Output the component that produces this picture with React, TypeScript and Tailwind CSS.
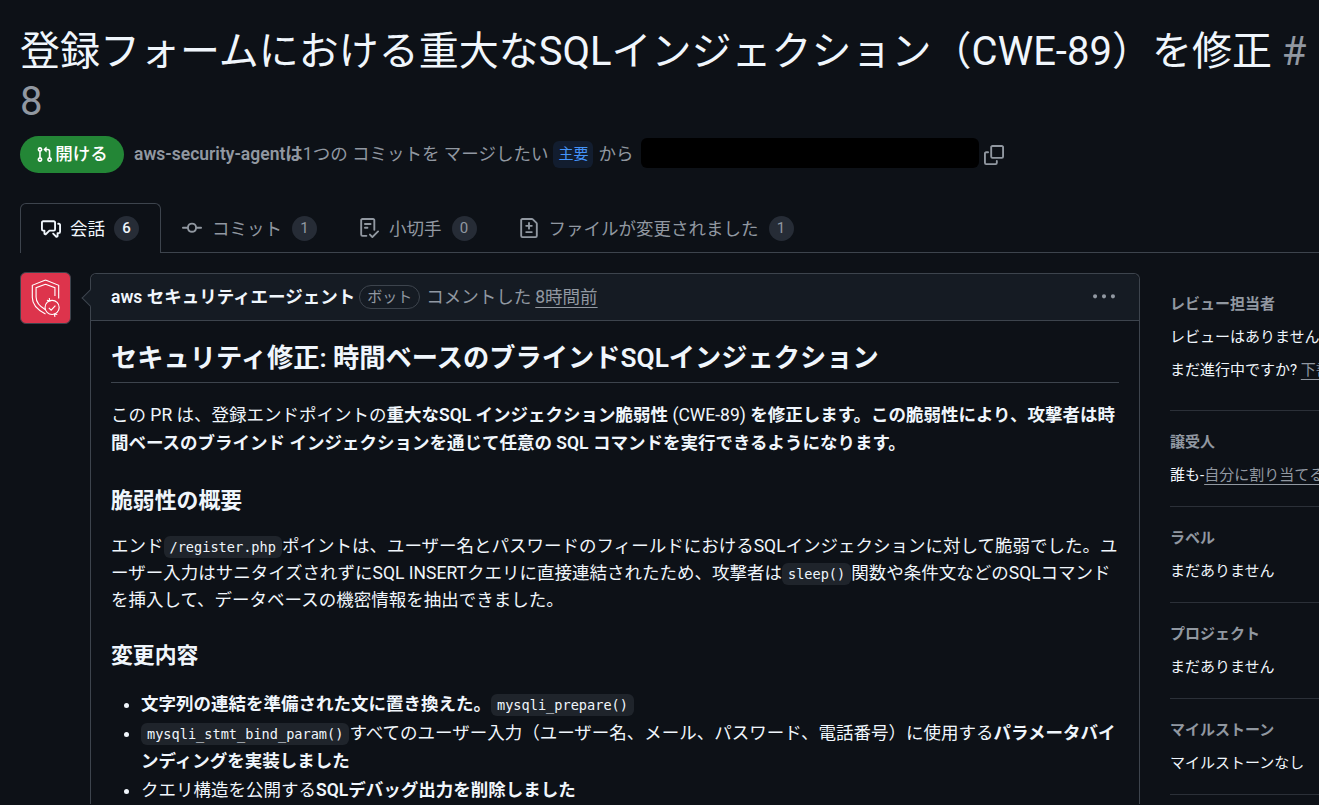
import type { ReactNode } from 'react'

const sans = 'font-["Roboto","Noto_Sans_CJK_JP",sans-serif]'

function Octicon({ d, className }: { d: string; className: string }) {
  return (
    <svg viewBox="0 0 16 16" fill="currentColor" className={className}>
      <path d={d} />
    </svg>
  )
}

const icons = {
  pull: 'M1.5 3.25a2.25 2.25 0 1 1 3 2.122v5.256a2.251 2.251 0 1 1-1.5 0V5.372A2.25 2.25 0 0 1 1.5 3.25Zm5.677-.177L9.573.677A.25.25 0 0 1 10 .854V2.5h1A2.5 2.5 0 0 1 13.5 5v5.628a2.251 2.251 0 1 1-1.5 0V5a1 1 0 0 0-1-1h-1v1.646a.25.25 0 0 1-.427.177L7.177 3.427a.25.25 0 0 1 0-.354ZM3.75 2.5a.75.75 0 1 0 0 1.5.75.75 0 0 0 0-1.5Zm0 9.5a.75.75 0 1 0 0 1.5.75.75 0 0 0 0-1.5Zm8.25.75a.75.75 0 1 0 1.5 0 .75.75 0 0 0-1.5 0Z',
  discussion: 'M1.75 1h8.5c.966 0 1.75.784 1.75 1.75v5.5A1.75 1.75 0 0 1 10.25 10H7.061l-2.574 2.573A1.458 1.458 0 0 1 2 11.543V10h-.25A1.75 1.75 0 0 1 0 8.25v-5.5C0 1.784.784 1 1.75 1ZM1.5 2.75v5.5c0 .138.112.25.25.25h1a.75.75 0 0 1 .75.75v2.19l2.72-2.72a.749.749 0 0 1 .53-.22h3.5a.25.25 0 0 0 .25-.25v-5.5a.25.25 0 0 0-.25-.25h-8.5a.25.25 0 0 0-.25.25Zm13 2a.25.25 0 0 0-.25-.25h-.5a.75.75 0 0 1 0-1.5h.5c.966 0 1.75.784 1.75 1.75v5.5A1.75 1.75 0 0 1 14.25 12H14v1.543a1.458 1.458 0 0 1-2.487 1.03L9.22 12.28a.749.749 0 0 1 .326-1.275.749.749 0 0 1 .734.215l2.22 2.22v-2.19a.75.75 0 0 1 .75-.75h1a.25.25 0 0 0 .25-.25Z',
  commit: 'M11.93 8.5a4.002 4.002 0 0 1-7.86 0H.75a.75.75 0 0 1 0-1.5h3.32a4.002 4.002 0 0 1 7.86 0h3.32a.75.75 0 0 1 0 1.5Zm-1.43-.75a2.5 2.5 0 1 0-5 0 2.5 2.5 0 0 0 5 0Z',
  checklist: 'M2.5 1.75v11.5c0 .138.112.25.25.25h3.17a.75.75 0 0 1 0 1.5H2.75A1.75 1.75 0 0 1 1 13.25V1.75C1 .784 1.784 0 2.75 0h8.5C12.216 0 13 .784 13 1.75v7.736a.75.75 0 0 1-1.5 0V1.75a.25.25 0 0 0-.25-.25h-8.5a.25.25 0 0 0-.25.25Zm13.274 9.537v-.001l-4.557 4.45a.75.75 0 0 1-1.055-.008l-1.943-1.95a.75.75 0 0 1 1.062-1.058l1.419 1.425 4.026-3.932a.75.75 0 1 1 1.048 1.074ZM4.75 4h4.5a.75.75 0 0 1 0 1.5h-4.5a.75.75 0 0 1 0-1.5ZM4 7.75A.75.75 0 0 1 4.75 7h2a.75.75 0 0 1 0 1.5h-2A.75.75 0 0 1 4 7.75Z',
  fileDiff: 'M1 1.75C1 .784 1.784 0 2.75 0h7.586c.464 0 .909.184 1.237.513l2.914 2.914c.329.328.513.773.513 1.237v9.586A1.75 1.75 0 0 1 13.25 16H2.75A1.75 1.75 0 0 1 1 14.25Zm1.75-.25a.25.25 0 0 0-.25.25v12.5c0 .138.112.25.25.25h10.5a.25.25 0 0 0 .25-.25V4.664a.25.25 0 0 0-.073-.177l-2.914-2.914a.25.25 0 0 0-.177-.073ZM8 3.25a.75.75 0 0 1 .75.75v1.5h1.5a.75.75 0 0 1 0 1.5h-1.5v1.5a.75.75 0 0 1-1.5 0V7h-1.5a.75.75 0 0 1 0-1.5h1.5V4A.75.75 0 0 1 8 3.25Zm-3 8a.75.75 0 0 1 .75-.75h4.5a.75.75 0 0 1 0 1.5h-4.5a.75.75 0 0 1-.75-.75Z',
  copy: 'M0 6.75C0 5.784.784 5 1.75 5h1.5a.75.75 0 0 1 0 1.5h-1.5a.25.25 0 0 0-.25.25v7.5c0 .138.112.25.25.25h7.5a.25.25 0 0 0 .25-.25v-1.5a.75.75 0 0 1 1.5 0v1.5A1.75 1.75 0 0 1 9.25 16h-7.5A1.75 1.75 0 0 1 0 14.25ZM5 1.75C5 .784 5.784 0 6.75 0h7.5C15.216 0 16 .784 16 1.75v7.5A1.75 1.75 0 0 1 14.25 11h-7.5A1.75 1.75 0 0 1 5 9.25Zm1.75-.25a.25.25 0 0 0-.25.25v7.5c0 .138.112.25.25.25h7.5a.25.25 0 0 0 .25-.25v-7.5a.25.25 0 0 0-.25-.25Z',
  kebab: 'M8 9a1.5 1.5 0 1 0 0-3 1.5 1.5 0 0 0 0 3ZM1.5 9a1.5 1.5 0 1 0 0-3 1.5 1.5 0 0 0 0 3Zm13 0a1.5 1.5 0 1 0 0-3 1.5 1.5 0 0 0 0 3Z',
}

function Code({ children }: { children: ReactNode }) {
  return (
    <code className='rounded-md bg-[#1f242b] px-[6px] py-[3px] font-["DejaVu_Sans_Mono",monospace] text-[13.6px] text-[#f0f6fc]'>
      {children}
    </code>
  )
}

function Tab({ icon, label, count, active }: { icon: string; label: string; count: number; active?: boolean }) {
  return (
    <div
      className={
        active
          ? 'relative flex h-[50px] items-center gap-[9px] rounded-t-md border border-b-0 border-[#3d444d] bg-[#0d1117] pr-[21px] pl-[20px] text-[#f0f6fc]'
          : 'flex h-[50px] items-center gap-[10px] px-[21px] text-[#9198a1]'
      }
    >
      <Octicon d={icon} className="size-[20px]" />
      <span className="pt-px text-[17.5px] leading-6">{label}</span>
      <span
        className={
          active
            ? 'flex size-[25px] items-center justify-center rounded-full bg-[#262c36] text-[15px] font-medium text-[#f0f6fc]'
            : 'flex size-[25px] items-center justify-center rounded-full bg-[#262c36] text-[15px] text-[#9198a1]'
        }
      >
        {count}
      </span>
    </div>
  )
}

function SideSection({ title, children }: { title: string; children: ReactNode }) {
  return (
    <div className="flex h-[96px] flex-col border-b border-[#2b3038] pt-[20px] text-[15px]">
      <div className="leading-[22px] font-semibold text-[#9198a1]">{title}</div>
      <div className="mt-[11px] leading-[22px] whitespace-nowrap text-[#f0f6fc]">{children}</div>
    </div>
  )
}

function AwsLogo() {
  return (
    <svg viewBox="0 0 52 52" className="size-[50px]" fill="none" stroke="#fff" strokeWidth="1.2">
      <path d="M26 7l14 5.500v14M26 7l-14 5.500v13c0 7 5 13 14 17.500" />
      <path d="M26 11.500l-10 3.500v10c0 6 4 10 10 13.500M26 11.500l10 3.500v9" />
      <circle cx="33" cy="36" r="7.500" fill="#dd344c" />
      <path d="M29.500 36.500l2.500 2.500 4.500-5" />
      <path d="M27.500 28.500l3 .5-.5-3M38.500 43.500l-3-.5.5 3" />
    </svg>
  )
}

export default function App() {
  return (
    <div className={`h-[805px] w-[1319px] overflow-hidden bg-[#0d1117] text-[#f0f6fc] ${sans}`}>
      <div className="pt-[27px] pl-5">
        <h1 className="text-[40px] leading-[50px] font-normal">
          登録フォームにおける重大なSQLインジェクション（CWE-89）を修正 <span className="text-[#9198a1]"># 8</span>
        </h1>

        <div className="mt-[9px] flex items-center text-[17.5px] text-[#9198a1]">
          <span className="flex h-[37px] w-[104px] items-center justify-center gap-[2px] rounded-full bg-[#238636] font-medium text-white">
            <Octicon d={icons.pull} className="size-[17px]" />
            開ける
          </span>
          <span className="ml-[10px] font-semibold">aws-security-agentは</span>
          <span>1つの コミットを マージしたい</span>
          <span className="mx-[5px] rounded-md bg-[#121d2f] px-[5px] py-[2px] text-[15px] text-[#4493f8]">主要</span>
          <span>から</span>
          <span className="mb-[4px] ml-[8px] h-[30px] w-[338px] rounded-md bg-black" />
          <Octicon d={icons.copy} className="ml-[5px] size-[20px]" />
        </div>

        <div className="mt-[30px] flex h-[50px] border-b border-[#3d444d]">
          <Tab icon={icons.discussion} label="会話" count={6} active />
          <Tab icon={icons.commit} label="コミット" count={1} />
          <Tab icon={icons.checklist} label="小切手" count={0} />
          <Tab icon={icons.fileDiff} label="ファイルが変更されました" count={1} />
        </div>

        <div className="mt-[19px] flex items-start">
          <div className="flex h-[52px] w-[51px] shrink-0 items-center justify-center rounded-md border border-[#3d444d] bg-[#dd344c]">
            <AwsLogo />
          </div>

          <div className="relative mt-px ml-[19px] w-[1050px] shrink-0 rounded-t-md border border-b-0 border-[#3d444d]">
            <span className="absolute top-[18px] -left-[7px] size-3 rotate-45 border-b border-l border-[#3d444d] bg-[#151b23]" />
            <div className="relative flex h-[47px] items-center rounded-t-md border-b border-[#3d444d] bg-[#151b23] pr-[24px] pl-[20px] text-[17.5px] text-[#9198a1]">
              <span className="font-semibold text-[#f0f6fc]">aws セキュリティエージェント</span>
              <span className="mr-[6px] ml-[4px] rounded-full border border-[#3d444d] px-[7px] text-[15px] leading-[22px]">ボット</span>
              <span>コメントした</span>
              <span className="ml-[4px] underline decoration-1 underline-offset-4">8時間前</span>
              <Octicon d={icons.kebab} className="ml-auto size-[22px]" />
            </div>

            <div className="px-5 pt-[18px] text-[17.5px] leading-[26px]">
              <h2 className="border-b border-[#3d444d] pb-[5px] text-[26.25px] leading-[38px] font-semibold">
                セキュリティ修正: 時間ベースのブラインドSQLインジェクション
              </h2>
              <p className="mt-[18px] leading-[28px]">
                この PR は、登録エンドポイントの<strong className="font-semibold">重大なSQL インジェクション脆弱性 </strong>(CWE-89) <strong className="font-semibold">を修正します。この脆弱性により、攻撃者は時間ベースのブラインド インジェクションを通じて任意の SQL コマンドを実行できるようになります。</strong>
              </p>
              <h3 className="mt-[28px] text-[21.875px] leading-[32px] font-semibold">脆弱性の概要</h3>
              <p className="mt-[16px]">
                エンド<Code>/register.php</Code>ポイントは、ユーザー名とパスワードのフィールドにおけるSQLインジェクションに対して脆弱でした。ユーザー入力はサニタイズされずにSQL INSERTクエリに直接連結されたため、攻撃者は<Code>sleep()</Code>関数や条件文などのSQLコマンドを挿入して、データベースの機密情報を抽出できました。
              </p>
              <h3 className="mt-[27px] text-[21.875px] leading-[32px] font-semibold">変更内容</h3>
              <ul className="mt-[19px] list-disc pl-[30px] leading-[27px]">
                <li>
                  <strong className="font-semibold">文字列の連結を準備された文に置き換えた。</strong>
                  <Code>mysqli_prepare()</Code>
                </li>
                <li className="mt-px">
                  <Code>mysqli_stmt_bind_param()</Code>すべてのユーザー入力（ユーザー名、メール、パスワード、電話番号）に使用する
                  <strong className="font-semibold">パラメータバインディングを実装しました</strong>
                </li>
                <li className="mt-[2px]">
                  クエリ構造を公開する<strong className="font-semibold">SQLデバッグ出力を削除しました</strong>
                </li>
              </ul>
            </div>
          </div>

          <aside className="mt-px ml-[30px] w-[160px] shrink-0">
            <div className="flex h-[138px] flex-col border-b border-[#2b3038] pt-[20px] text-[15px]">
              <div className="leading-[22px] font-semibold text-[#9198a1]">レビュー担当者</div>
              <div className="mt-[11px] leading-[22px] whitespace-nowrap">レビューはありません</div>
              <div className="mt-[11px] leading-[22px] whitespace-nowrap">
                まだ進行中ですか? <span className="text-[#9198a1] underline underline-offset-4">下書きに変換</span>
              </div>
            </div>
            <SideSection title="譲受人">
              誰も-<span className="text-[#9198a1] underline underline-offset-4">自分に割り当てる</span>
            </SideSection>
            <SideSection title="ラベル">まだありません</SideSection>
            <SideSection title="プロジェクト">まだありません</SideSection>
            <SideSection title="マイルストーン">マイルストーンなし</SideSection>
          </aside>
        </div>
      </div>
    </div>
  )
}
